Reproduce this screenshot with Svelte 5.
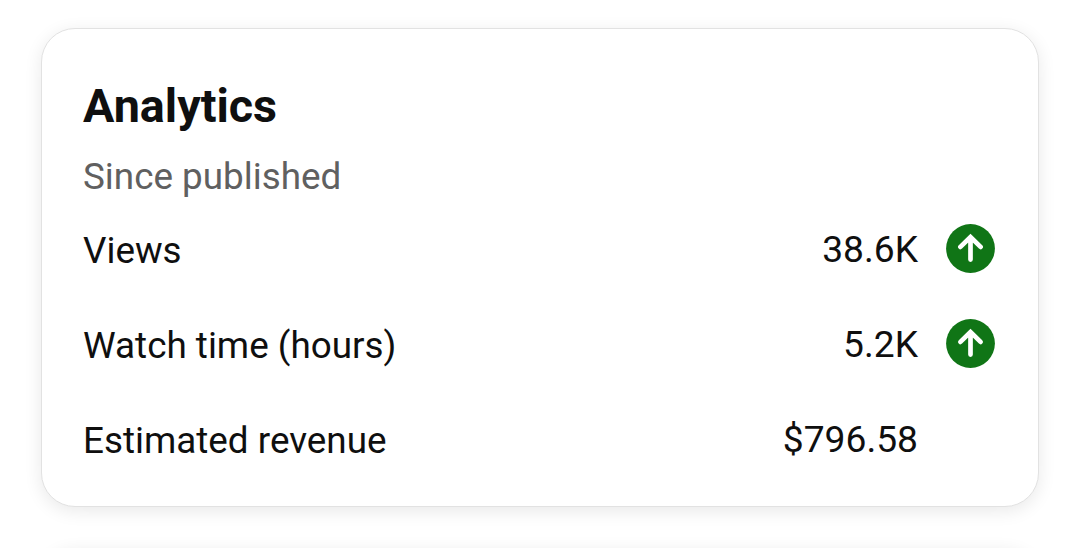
<script lang="ts">
  interface Metric {
    label: string;
    value: string;
    trend?: "up";
  }

  export let metrics: Metric[] = [
    { label: "Views", value: "38.6K", trend: "up" },
    { label: "Watch time (hours)", value: "5.2K", trend: "up" },
    { label: "Estimated revenue", value: "$796.58" }
  ];
</script>

<main class="page">
  <section class="card">
    <h2 class="title">Analytics</h2>
    <p class="subtitle">Since published</p>

    <div class="metrics">
      {#each metrics as metric}
        <div class="metric">
          <span class="label">{metric.label}</span>
          <span class="value">{metric.value}</span>
          <span class="trend">
            {#if metric.trend === "up"}
              <svg width="50" height="50" viewBox="0 0 50 50" fill="none">
                <circle cx="24.5" cy="24.5" r="24.4" fill="#107516" />
                <path
                  d="M24.5 35.6V13.5M14.4 22.9L24.5 13L34.6 22.9"
                  stroke="#fff"
                  stroke-width="4.7"
                  stroke-linecap="round"
                />
              </svg>
            {/if}
          </span>
        </div>
      {/each}
    </div>
  </section>

  <!-- Top edge of the next card -->
  <section class="card next"></section>
</main>

<style>
  :global(body) {
    background: #fff;
    overflow: hidden;
  }

  .page {
    box-sizing: border-box;
    height: 548px;
    padding: 28px 41px 0;
    overflow: hidden;
    font-family: Roboto, "Liberation Sans", sans-serif;
    color: #0f0f0f;
  }

  .card {
    box-sizing: border-box;
    height: 479px;
    padding: 47px 42px 0 41px;
    border: 1px solid #e2e2e2;
    border-radius: 34px;
    background: #fff;
    box-shadow: 0 4px 18px rgba(0, 0, 0, 0.09);
  }

  .next {
    margin-top: 41px;
  }

  .title {
    margin: 0;
    font-size: 46.7px;
    font-weight: 700;
    line-height: 60px;
  }

  .subtitle {
    margin: 15px 0 0;
    font-size: 36.85px;
    line-height: 52px;
    color: #606060;
  }

  .metric {
    display: flex;
    align-items: center;
    height: 95px;
    font-size: 36.85px;
    line-height: 44px;
  }

  .label {
    flex: 1;
  }

  .value {
    padding-bottom: 3px;
    font-size: 37.2px;
  }

  .trend {
    display: flex;
    width: 50px;
    margin-left: 28px;
    padding-bottom: 4px;
  }
</style>
